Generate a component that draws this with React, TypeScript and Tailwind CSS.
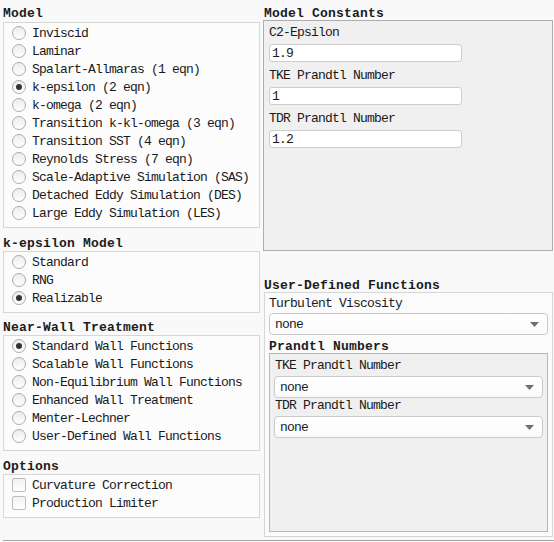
import React from "react";

type Opt = { label: string; checked?: boolean };

const modelOpts: Opt[] = [
  { label: "Inviscid" },
  { label: "Laminar" },
  { label: "Spalart-Allmaras (1 eqn)" },
  { label: "k-epsilon (2 eqn)", checked: true },
  { label: "k-omega (2 eqn)" },
  { label: "Transition k-kl-omega (3 eqn)" },
  { label: "Transition SST (4 eqn)" },
  { label: "Reynolds Stress (7 eqn)" },
  { label: "Scale-Adaptive Simulation (SAS)" },
  { label: "Detached Eddy Simulation (DES)" },
  { label: "Large Eddy Simulation (LES)" },
];

const kepsOpts: Opt[] = [
  { label: "Standard" },
  { label: "RNG" },
  { label: "Realizable", checked: true },
];

const wallOpts: Opt[] = [
  { label: "Standard Wall Functions", checked: true },
  { label: "Scalable Wall Functions" },
  { label: "Non-Equilibrium Wall Functions" },
  { label: "Enhanced Wall Treatment" },
  { label: "Menter-Lechner" },
  { label: "User-Defined Wall Functions" },
];

// Section heading; height/leading are supplied by the caller
function Title({ children, className = "" }: { children: React.ReactNode; className?: string }) {
  return (
    <div
      className={`whitespace-nowrap font-['Liberation_Mono',monospace] text-[13px] font-bold tracking-[0.2px] text-[#1c1c1c] ${className}`}
    >
      {children}
    </div>
  );
}

function Radio({ label, checked }: Opt) {
  return (
    <div className="flex h-[18px] items-center">
      <span className="flex h-[14px] w-[14px] shrink-0 items-center justify-center rounded-full border border-[#ababab] bg-gradient-to-b from-[#ececec] to-white">
        {checked && <span className="h-[6px] w-[6px] rounded-full bg-[#343434]" />}
      </span>
      <span className="ml-[6px] h-[18px] whitespace-nowrap pt-[2px] font-['Liberation_Mono',monospace] text-[13px] leading-[16px] tracking-[-0.8px] text-[#1a1a1a]">
        {label}
      </span>
    </div>
  );
}

function Check({ label }: { label: string }) {
  return (
    <div className="flex h-[18px] items-center">
      <span className="h-[14px] w-[14px] shrink-0 rounded-[2px] border border-[#bdbdbd] bg-gradient-to-b from-[#f2f2f2] to-white" />
      <span className="ml-[6px] h-[18px] whitespace-nowrap pt-[2px] font-['Liberation_Mono',monospace] text-[13px] leading-[16px] tracking-[-0.8px] text-[#1a1a1a]">
        {label}
      </span>
    </div>
  );
}

function Group({ children, className = "" }: { children: React.ReactNode; className?: string }) {
  return (
    <div className={`w-[257px] border border-[#d6d6d6] bg-[#fcfcfc] pb-[5px] pl-[8px] pt-[1px] ${className}`}>
      {children}
    </div>
  );
}

function Label({ children, className = "" }: { children: React.ReactNode; className?: string }) {
  return (
    <div
      className={`whitespace-nowrap font-['Liberation_Mono',monospace] text-[13px] tracking-[-0.8px] text-[#1a1a1a] ${className}`}
    >
      {children}
    </div>
  );
}

function Field({ value, className = "" }: { value: string; className?: string }) {
  return (
    <div
      className={`h-[18px] w-[193px] rounded-[3px] border border-[#cdcdcd] bg-white pl-[2px] pt-[1px] font-['Liberation_Mono',monospace] text-[13px] leading-[16px] tracking-[-0.8px] text-[#1a1a1a] ${className}`}
    >
      {value}
    </div>
  );
}

function Dropdown({ value, className = "" }: { value: string; className?: string }) {
  return (
    <div
      className={`flex h-[22px] items-center justify-between rounded-[4px] border border-[#cacaca] bg-gradient-to-b from-white to-[#fbfbfb] pl-[5px] pr-[8px] ${className}`}
    >
      <span className="pt-[1px] font-['Liberation_Mono',monospace] text-[13px] leading-[18px] tracking-[-0.8px] text-[#1a1a1a]">
        {value}
      </span>
      <svg width="9" height="5" viewBox="0 0 9 5">
        <path d="M0 0 H9 L4.5 5 Z" fill="#6f6f6f" />
      </svg>
    </div>
  );
}

export default function App() {
  return (
    <div className="flex h-[542px] w-[554px] flex-col overflow-hidden bg-[#f9f9f9]">
      <div className="flex h-[540px] pt-[5px]">
        {/* left column: model selection groups */}
        <div className="flex w-[260px] flex-col pl-[3px]">
          <Title className="h-[16px] pt-[2px] leading-[14px]">Model</Title>
          <Group className="mt-[1px]">
            {modelOpts.map((o) => (
              <Radio key={o.label} {...o} />
            ))}
          </Group>

          <Title className="mt-[7px] h-[16px] pt-[2px] leading-[14px]">k-epsilon Model</Title>
          <Group>
            {kepsOpts.map((o) => (
              <Radio key={o.label} {...o} />
            ))}
          </Group>

          <Title className="mt-[6px] h-[16px] pt-[2px] leading-[14px]">Near-Wall Treatment</Title>
          <Group>
            {wallOpts.map((o) => (
              <Radio key={o.label} {...o} />
            ))}
          </Group>

          <Title className="mt-[7px] h-[16px] pt-[2px] leading-[14px]">Options</Title>
          <Group>
            <Check label="Curvature Correction" />
            <Check label="Production Limiter" />
          </Group>
        </div>

        {/* right column: constants and UDFs */}
        <div className="ml-[3px] flex w-[290px] flex-col">
          <Title className="ml-[1px] h-[15px] pt-[2px] leading-[13px]">Model Constants</Title>
          <div className="h-[231px] border border-[#adadad] bg-[#f0f0f0] pl-[5px] pt-[3px]">
            <Label className="h-[16px] pt-[2px] leading-[14px]">C2-Epsilon</Label>
            <Field value="1.9" className="mt-[4px]" />
            <Label className="mt-[5px] h-[16px] pt-[2px] leading-[14px]">TKE Prandtl Number</Label>
            <Field value="1" className="mt-[4px]" />
            <Label className="mt-[5px] h-[16px] pt-[2px] leading-[14px]">TDR Prandtl Number</Label>
            <Field value="1.2" className="mt-[4px]" />
          </div>

          <Title className="ml-[1px] mt-[26px] h-[15px] pt-[2px] leading-[13px]">User-Defined Functions</Title>
          <div className="ml-[1px] flex h-[245px] w-[289px] flex-col border border-[#d6d6d6] bg-[#fbfbfb] px-[4px] pb-[4px] pt-[2px]">
            <Label className="h-[16px] pt-[2px] leading-[14px]">Turbulent Viscosity</Label>
            <Dropdown value="none" className="mt-[2px]" />
            <Title className="mt-[4px] h-[14px] pt-[2px] leading-[12px]">Prandtl Numbers</Title>
            <div className="flex flex-1 flex-col border border-[#b6b6b6] bg-[#f0f0f0] px-[4px] pt-[4px]">
              <Label className="ml-[1px] h-[14px] pt-[2px] leading-[12px]">TKE Prandtl Number</Label>
              <Dropdown value="none" className="mt-[4px]" />
              <Label className="ml-[1px] h-[14px] pt-[2px] leading-[12px]">TDR Prandtl Number</Label>
              <Dropdown value="none" className="mt-[4px]" />
            </div>
          </div>
        </div>
      </div>
      <div className="ml-[3px] h-px bg-[#a4a4a4]" />
    </div>
  );
}
